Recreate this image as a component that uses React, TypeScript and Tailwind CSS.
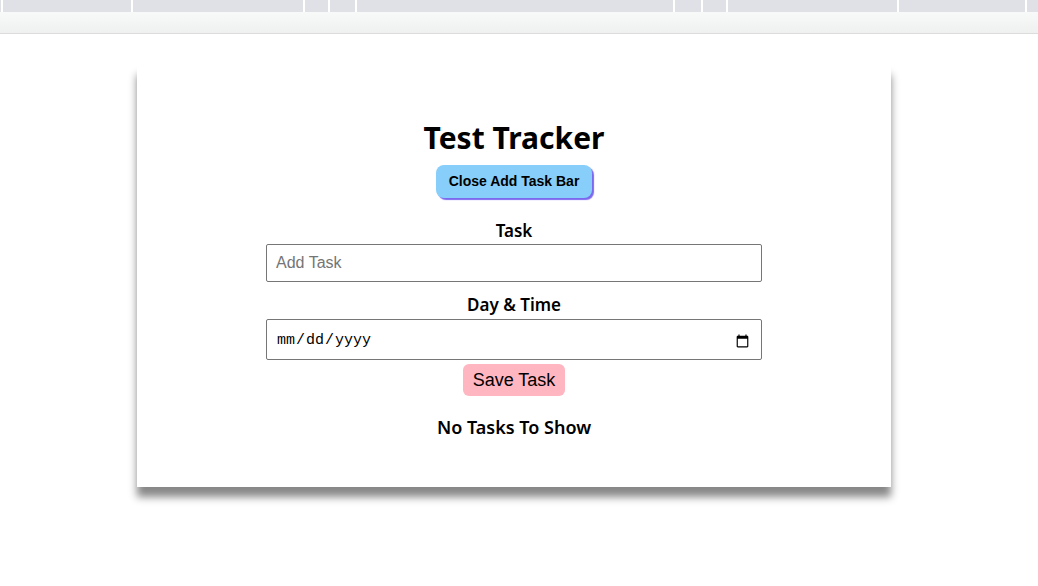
import React from "react";

const seps = [1, 131, 303, 328, 355, 673, 701, 726, 897, 1025];

export default function App() {
  const segs: number[] = [];
  for (let i = 0; i < seps.length; i++) {
    const next = i + 1 < seps.length ? seps[i + 1] : 1038;
    segs.push(next - seps[i]);
  }
  return (
    <div className="w-[1038px] h-[586px] bg-white overflow-hidden" style={{ fontFamily: "'Noto Sans', sans-serif" }}>
      <div className="h-[12px] bg-[#dfe1e6] flex">
        <div className="w-[1px]" />
        {segs.map((w, i) => (
          <div key={i} className="h-full border-l-2 border-white" style={{ width: w }} />
        ))}
      </div>
      <div className="h-[22px] bg-gradient-to-b from-[#f8f9f9] to-[#eff0f0] border-b border-[#dcdcdc]" />
      <div className="ml-[137px] mt-[31px] w-[754px] h-[422px] bg-white shadow-[0_10px_8px_#888888] flex flex-col items-center">
        <h1 className="mt-[54px] text-[30px] leading-[38px] font-bold text-black">Test Tracker</h1>
        <button
          className="mt-[8px] h-[33px] px-[13px] rounded-[8px] bg-[#87cefa] text-[14px] font-bold text-black shadow-[2px_2px_1px_#7b68ee]"
          style={{ fontFamily: "'Liberation Sans', Arial, sans-serif" }}
        >
          Close Add Task Bar
        </button>
        <div className="mt-[22px] w-[496px] flex flex-col items-center">
          <label className="text-[17px] leading-[22px] font-semibold text-black">Task</label>
          <input
            type="text"
            placeholder="Add Task"
            className="mt-[2px] w-full h-[38px] border border-[#767676] rounded-[2px] px-[9px] text-[16px] placeholder-[#757575] outline-none"
            style={{ fontFamily: "'Liberation Sans', Arial, sans-serif" }}
          />
          <label className="mt-[12px] text-[17px] leading-[22px] font-semibold text-black">Day &amp; Time</label>
          <input
            type="date"
            className="mt-[3px] w-full h-[41px] border border-[#767676] rounded-[2px] px-[9px] pt-[3px] text-[15px] text-black outline-none"
            style={{ fontFamily: "'Liberation Mono', monospace" }}
          />
          <button
            className="mt-[4px] h-[32px] px-[10px] rounded-[6px] bg-[#ffb6c1] text-[18px] text-black"
            style={{ fontFamily: "'Liberation Sans', Arial, sans-serif" }}
          >
            Save Task
          </button>
          <div className="mt-[18px] text-[18px] leading-[26px] font-semibold text-black">No Tasks To Show</div>
        </div>
      </div>
    </div>
  );
}
